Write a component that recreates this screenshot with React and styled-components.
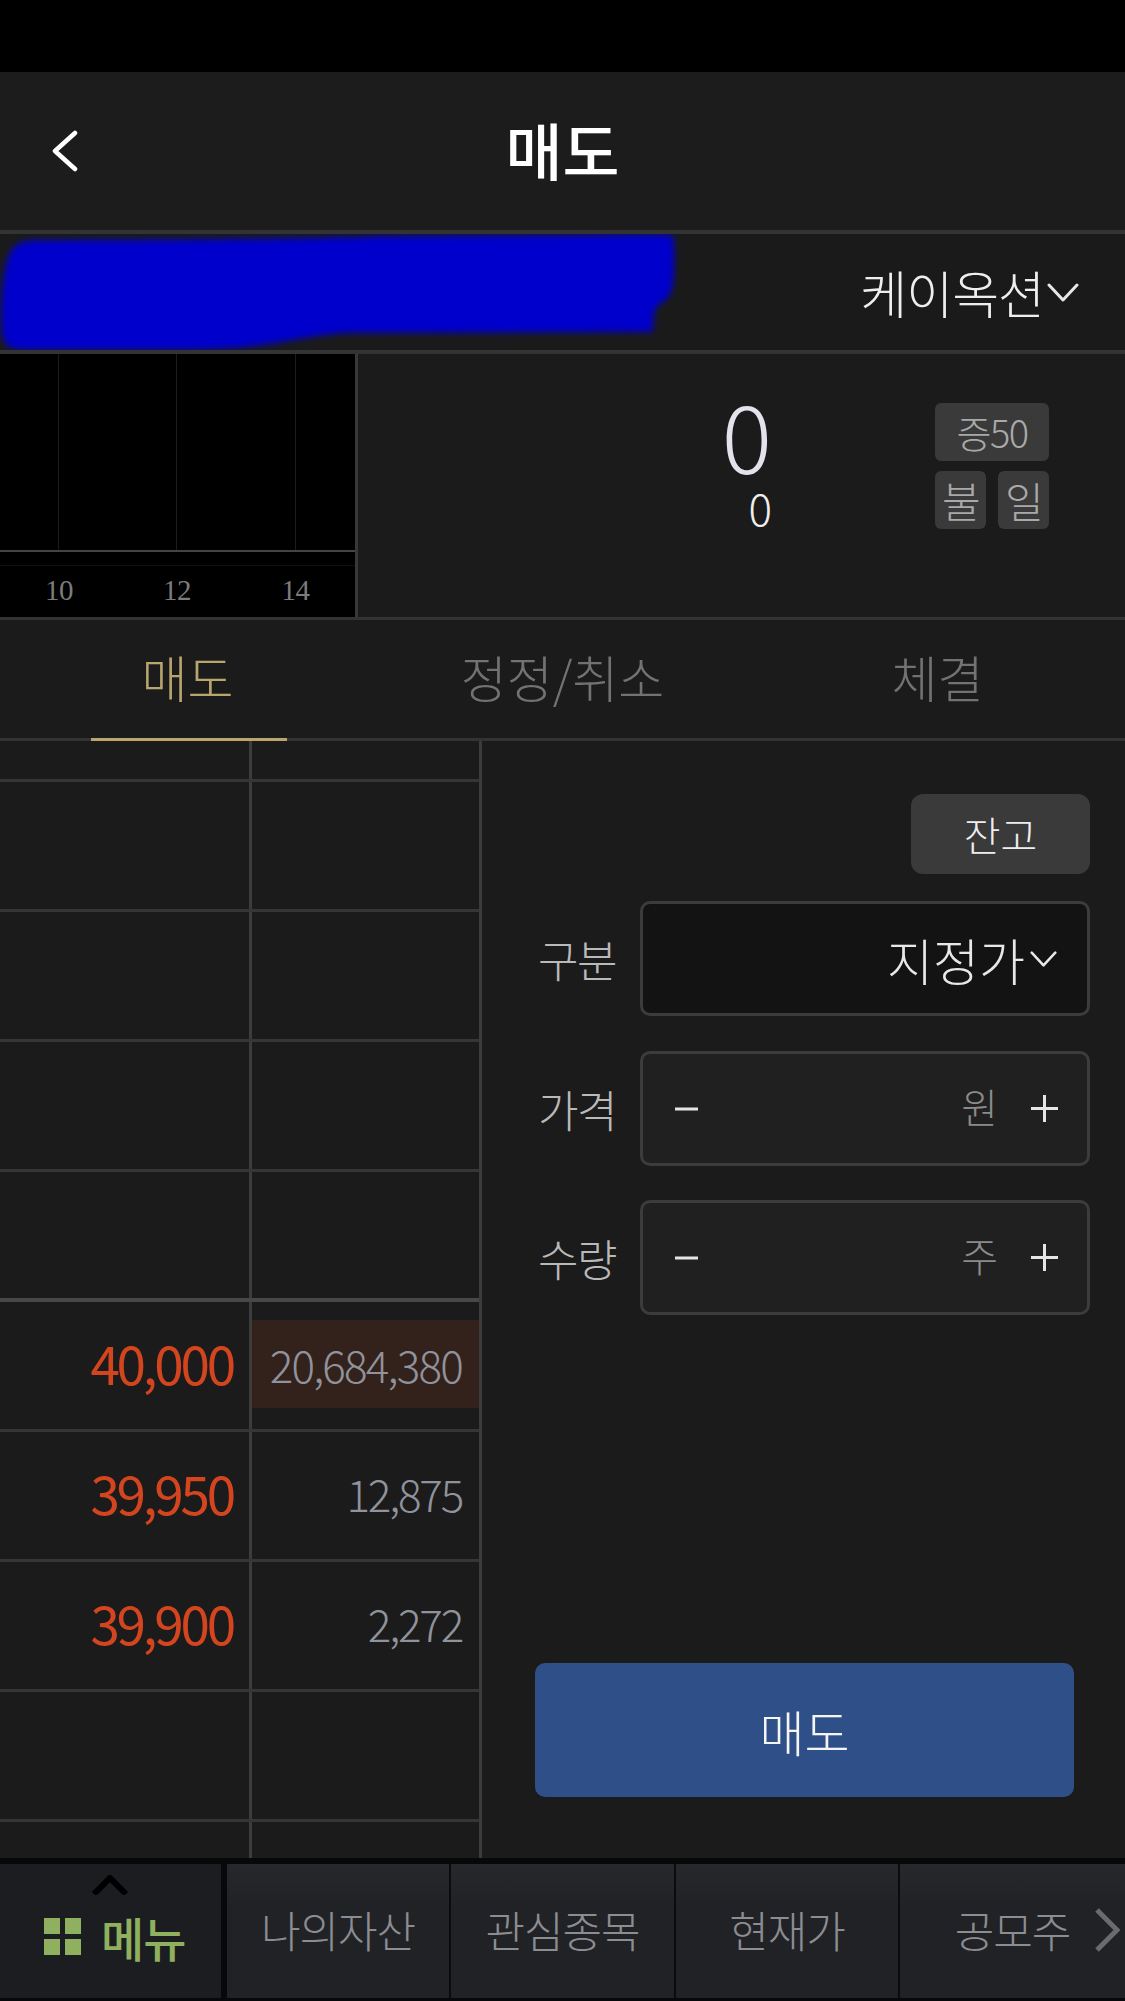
import React from "react";
import styled, { createGlobalStyle } from "styled-components";

const Global = createGlobalStyle`
html, body { margin: 0; padding: 0; background: #000; }
* { box-sizing: border-box; }
body { font-family: "Noto Sans CJK KR", "Noto Sans", sans-serif; font-weight: 300; }
`;

const Page = styled.div`
width: 1125px;
height: 2001px;
display: flex;
flex-direction: column;
background: #1b1b1b;
overflow: hidden;
`;

const StatusBar = styled.div`
height: 72px;
flex: none;
background: #000;
`;

const Header = styled.header`
height: 162px;
flex: none;
display: grid;
grid-template-columns: 1fr auto 1fr;
align-items: center;
border-bottom: 4px solid #333;
background: #1c1c1c;
svg { margin-left: 52px; }
`;

const Title = styled.h1`
margin: 0 0 4px;
font-size: 62px;
line-height: 1;
font-weight: 500;
color: #fff;
`;

const AccountRow = styled.div`
height: 120px;
flex: none;
display: flex;
align-items: center;
justify-content: space-between;
padding-right: 46px;
border-bottom: 4px solid #333;
background: #1a1a1a;
`;

const Broker = styled.div`
display: flex;
align-items: center;
gap: 3px;
font-size: 51px;
line-height: 1;
letter-spacing: -1px;
color: #eee;
`;

const QuoteRow = styled.section`
height: 266px;
flex: none;
display: flex;
border-bottom: 3px solid #333;
`;

const Chart = styled.div`
width: 358px;
flex: none;
display: flex;
flex-direction: column;
background: #000;
border-right: 3px solid #383838;
`;

const ChartPlot = styled.div`
height: 198px;
flex: none;
display: grid;
grid-template-columns: 59px 118px 119px 1fr;
border-bottom: 2px solid #444;
`;

const GridCell = styled.div`
border-right: 1px solid #1c1c1c;
&:last-child { border-right: none; }
`;

const ChartAxis = styled.div`
flex: 1;
display: grid;
grid-template-columns: 118px 118px 119px;
margin-top: 13px;
border-top: 1px solid #111;
`;

const AxisLabel = styled.span`
font-family: "Liberation Serif", serif;
font-weight: 400;
font-size: 29px;
line-height: 1;
margin-top: 10px;
text-align: center;
letter-spacing: -0.5px;
color: #7c7c7c;
`;

const QuoteInfo = styled.div`
flex: 1;
display: flex;
justify-content: flex-end;
align-items: flex-start;
padding: 49px 76px 0 0;
`;

const Prices = styled.div`
display: flex;
flex-direction: column;
align-items: flex-end;
margin: -10px 161px 0 0;
`;

const BigPrice = styled.div`
font-size: 94px;
line-height: 80px;
margin-right: 2px;
color: #e3e3ee;
`;

const SmallPrice = styled.div`
font-size: 44px;
line-height: 48px;
margin-top: 10px;
margin-right: 2px;
color: #eee;
`;

const Badges = styled.div`
width: 114px;
display: grid;
grid-template-columns: 51px 51px;
justify-content: space-between;
grid-auto-rows: 58px;
gap: 10px 12px;
`;

const Badge = styled.div`
grid-column: ${(p) => (p.$wide ? "1 / 3" : "auto")};
display: flex;
align-items: center;
justify-content: center;
border-radius: 6px;
background: #3a3a3a;
font-size: ${(p) => (p.$wide ? 38 : 42)}px;
line-height: 1;
letter-spacing: -1.5px;
color: #a9a9a9;
`;

const Tabs = styled.nav`
height: 121px;
flex: none;
display: grid;
grid-template-columns: repeat(3, 1fr);
border-bottom: 3px solid #333;
`;

const Tab = styled.div`
position: relative;
display: flex;
align-items: center;
justify-content: center;
padding-bottom: 6px;
font-size: 50px;
line-height: 1;
color: ${(p) => (p.$active ? "#b9a66f" : "#727272")};
${(p) =>
  p.$active &&
  `&::after {
    content: "";
    position: absolute;
    left: 91px;
    bottom: -3px;
    width: 196px;
    height: 3px;
    background: #b9a66f;
  }`}
`;

const Main = styled.main`
flex: 1;
min-height: 0;
display: flex;
`;

const Book = styled.div`
width: 482px;
flex: none;
border-right: 3px solid #3c3c3c;
`;

const BookRow = styled.div`
height: ${(p) => p.$h}px;
display: grid;
grid-template-columns: 252px 1fr;
border-bottom: ${(p) => (p.$last ? "none" : p.$strong ? "4px solid #484848" : "3px solid #363636")};
`;

const PriceCell = styled.div`
display: flex;
align-items: center;
justify-content: flex-end;
padding: 0 16px 8px 0;
border-right: 3px solid #3c3c3c;
font-size: 53px;
font-weight: 400;
letter-spacing: -3.2px;
color: #d3451f;
`;

const VolCell = styled.div`
display: flex;
align-items: center;
justify-content: flex-end;
padding: 0 17px 6px 0;
font-size: 44px;
letter-spacing: -2.2px;
color: #90939b;
`;

const VolHighlight = styled(VolCell)`
align-self: start;
height: 88px;
margin-top: 18px;
padding-bottom: 0;
letter-spacing: -1.8px;
background: #33221c;
`;

const OrderPanel = styled.div`
flex: 1;
display: flex;
flex-direction: column;
padding: 53px 36px 0 53px;
`;

const BalanceBtn = styled.button`
align-self: flex-end;
width: 179px;
height: 80px;
border: none;
border-radius: 12px;
background: #3a3a3a;
font: inherit;
font-size: 40px;
color: #eee;
`;

const Field = styled.div`
display: flex;
align-items: center;
justify-content: space-between;
width: 555px;
height: 115px;
margin-top: ${(p) => p.$top}px;
`;

const FieldLabel = styled.span`
margin-left: 3px;
font-size: 44px;
line-height: 1;
letter-spacing: -1.5px;
color: #b9b9b9;
`;

const SelectBox = styled.div`
width: 450px;
height: 115px;
display: flex;
align-items: center;
justify-content: flex-end;
gap: 5px;
padding-right: 30px;
border: 3px solid #3c3c3c;
border-radius: 10px;
background: #131313;
font-size: 50px;
line-height: 1;
color: #e8e8e8;
`;

const Stepper = styled.div`
width: 450px;
height: 115px;
display: flex;
align-items: center;
padding: 0 29px 0 32px;
border: 3px solid #3c3c3c;
border-radius: 10px;
background: #202020;
`;

const Unit = styled.span`
margin-left: auto;
margin-right: 33px;
padding-bottom: 6px;
font-size: 40px;
line-height: 1;
color: #8b8b8b;
`;

const SellBtn = styled.button`
width: 539px;
height: 134px;
margin-top: auto;
margin-bottom: 61px;
align-self: flex-start;
border: none;
border-radius: 10px;
background: #2e4f87;
font: inherit;
font-size: 49px;
color: #f5f5f5;
`;

const BottomBar = styled.footer`
height: 143px;
flex: none;
display: grid;
grid-template-columns: 221px 230px 225px 224px 225px;
position: relative;
padding: 6px 0 3px;
background: #07080a;
`;

const MenuCell = styled.div`
position: relative;
display: flex;
align-items: center;
gap: 20px;
padding: 10px 0 0 44px;
background: #1b1d20;
font-size: 47px;
font-weight: 500;
letter-spacing: -1px;
color: #8fb05e;
`;

const NavCell = styled.div`
display: flex;
align-items: center;
justify-content: center;
margin-left: ${(p) => (p.$first ? 6 : 0)}px;
padding-bottom: 4px;
border-right: ${(p) => (p.$end ? "none" : "2px solid #0b0b0c")};
background: linear-gradient(#27282b, #212225 30%);
font-size: 43px;
line-height: 1;
letter-spacing: -1px;
color: #8b8d92;
`;

const MoreArrow = styled.svg`
position: absolute;
right: 5px;
top: 50px;
`;

const MenuCaret = styled.svg`
position: absolute;
left: 91px;
top: 11px;
`;

const Chevron = ({ w = 32, h = 19, sw = 3 }) => (
  <svg width={w} height={h} viewBox="0 0 32 19" fill="none">
    <path d="M2 2 L16 17 L30 2" stroke="#e8e8e8" strokeWidth={sw} strokeLinecap="round" strokeLinejoin="round" />
  </svg>
);

const Minus = () => (
  <svg width="24" height="24" viewBox="0 0 24 24">
    <rect x="0" y="10.5" width="23" height="3" fill="#e5e5e5" />
  </svg>
);

const Plus = () => (
  <svg width="27" height="27" viewBox="0 0 27 27">
    <path d="M0 13.5 H27 M13.5 0 V27" stroke="#e5e5e5" strokeWidth="3" />
  </svg>
);

const rows = [
  { h: 41 },
  { h: 130 },
  { h: 130 },
  { h: 130 },
  { h: 130, strong: true },
  { h: 130, price: "40,000", vol: "20,684,380", top: true },
  { h: 130, price: "39,950", vol: "12,875" },
  { h: 130, price: "39,900", vol: "2,272" },
  { h: 130 },
  { h: 36, last: true },
];

export default function App() {
  return (
    <Page>
      <Global />
      <StatusBar />
      <Header>
        <svg width="26" height="42" viewBox="0 0 26 42" fill="none">
          <path d="M23 3 L3 21 L23 39" stroke="#fff" strokeWidth="4.5" strokeLinecap="round" strokeLinejoin="round" />
        </svg>
        <Title>매도</Title>
      </Header>
      <AccountRow>
        {/* account number is scribbled out in the source picture */}
        <svg width="680" height="116" viewBox="0 0 680 116" style={{ flex: "none" }}>
          <defs>
            <filter id="soft">
              <feGaussianBlur stdDeviation="3" />
            </filter>
          </defs>
          <path
            d="M2 100 C0 80 2 40 8 24 C12 10 22 6 40 6 C150 6 300 5 380 2 L668 0 C675 0 675 10 674 40 C673 60 668 66 660 70 C654 74 653 82 653 98 L350 99 C300 101 270 116 190 116 L26 116 C10 116 4 112 2 100 Z"
            fill="#0000cc"
            filter="url(#soft)"
          />
        </svg>
        <Broker>
          케이옥션
          <Chevron />
        </Broker>
      </AccountRow>
      <QuoteRow>
        <Chart>
          <ChartPlot>
            <GridCell />
            <GridCell />
            <GridCell />
            <GridCell />
          </ChartPlot>
          <ChartAxis>
            <AxisLabel>10</AxisLabel>
            <AxisLabel>12</AxisLabel>
            <AxisLabel>14</AxisLabel>
          </ChartAxis>
        </Chart>
        <QuoteInfo>
          <Prices>
            <BigPrice>0</BigPrice>
            <SmallPrice>0</SmallPrice>
          </Prices>
          <Badges>
            <Badge $wide>증50</Badge>
            <Badge>불</Badge>
            <Badge>일</Badge>
          </Badges>
        </QuoteInfo>
      </QuoteRow>
      <Tabs>
        <Tab $active>매도</Tab>
        <Tab>정정/취소</Tab>
        <Tab>체결</Tab>
      </Tabs>
      <Main>
        <Book>
          {rows.map((r, i) => (
            <BookRow key={i} $h={r.h} $strong={r.strong} $last={r.last}>
              <PriceCell>{r.price}</PriceCell>
              {r.top ? <VolHighlight>{r.vol}</VolHighlight> : <VolCell>{r.vol}</VolCell>}
            </BookRow>
          ))}
        </Book>
        <OrderPanel>
          <BalanceBtn>잔고</BalanceBtn>
          <Field $top={27}>
            <FieldLabel>구분</FieldLabel>
            <SelectBox>
              지정가
              <Chevron w={27} h={16} sw={3} />
            </SelectBox>
          </Field>
          <Field $top={35}>
            <FieldLabel>가격</FieldLabel>
            <Stepper>
              <Minus />
              <Unit>원</Unit>
              <Plus />
            </Stepper>
          </Field>
          <Field $top={34}>
            <FieldLabel>수량</FieldLabel>
            <Stepper>
              <Minus />
              <Unit>주</Unit>
              <Plus />
            </Stepper>
          </Field>
          <SellBtn>매도</SellBtn>
        </OrderPanel>
      </Main>
      <BottomBar>
        <MenuCell>
          <svg width="37" height="37" viewBox="0 0 37 37" style={{ flex: "none" }}>
            <rect x="0" y="0" width="16" height="16" fill="#8fb05e" />
            <rect x="21" y="0" width="16" height="16" fill="#8fb05e" />
            <rect x="0" y="21" width="16" height="16" fill="#8fb05e" />
            <rect x="21" y="21" width="16" height="16" fill="#8fb05e" />
          </svg>
          메뉴
          <MenuCaret width="38" height="20" viewBox="0 0 38 20" fill="none">
            <path d="M3 19 L19 3 L35 19" stroke="#000" strokeWidth="6" />
          </MenuCaret>
        </MenuCell>
        <NavCell $first>나의자산</NavCell>
        <NavCell>관심종목</NavCell>
        <NavCell>현재가</NavCell>
        <NavCell $end>공모주</NavCell>
        <MoreArrow width="26" height="44" viewBox="0 0 26 44" fill="none">
          <path d="M3 2 L23 22 L3 42" stroke="#6a6b6e" strokeWidth="5" />
        </MoreArrow>
      </BottomBar>
    </Page>
  );
}
